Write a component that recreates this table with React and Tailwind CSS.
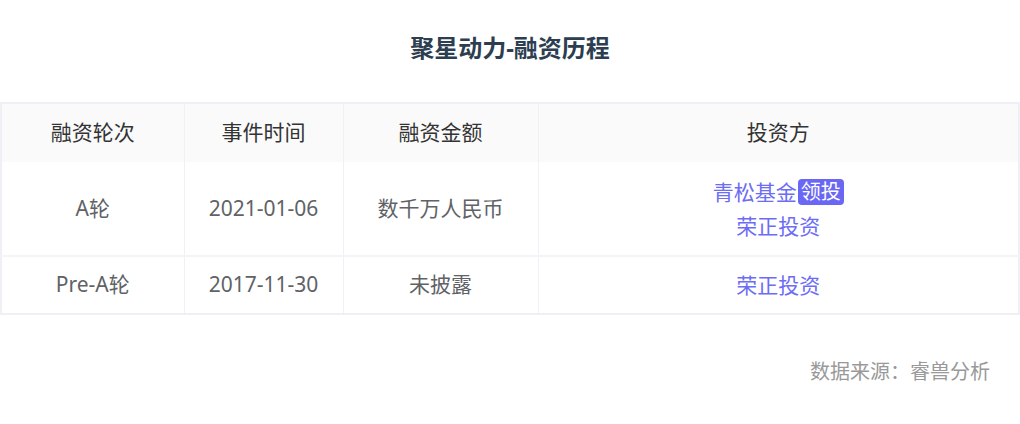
const rows = [
  { round: 'A轮', date: '2021-01-06', amount: '数千万人民币', investors: [{ name: '青松基金', lead: true }, { name: '荣正投资' }] },
  { round: 'Pre-A轮', date: '2017-11-30', amount: '未披露', investors: [{ name: '荣正投资' }] },
]

export default function App() {
  return (
    <div className="w-[1020px] h-[424px] bg-white" style={{ fontFamily: '"Noto Sans", "Noto Sans CJK SC", sans-serif' }}>
      <h1 className="pt-[32px] h-[102px] text-center text-[24px] font-bold text-[#2c3e50] leading-[32px]">聚星动力-融资历程</h1>

      <table className="w-[1020px] border-collapse border-2 border-[#eef0f5] text-[21px] text-[#606266]">
        <colgroup>
          <col className="w-[183px]" />
          <col className="w-[159px]" />
          <col className="w-[195px]" />
          <col />
        </colgroup>
        <thead>
          <tr className="h-[59px] bg-[#fafafa] text-[#333]">
            <th className="font-normal border-r border-[#f0f1f5]">融资轮次</th>
            <th className="font-normal border-r border-[#f0f1f5]">事件时间</th>
            <th className="font-normal border-r border-[#f0f1f5]">融资金额</th>
            <th className="font-normal">投资方</th>
          </tr>
        </thead>
        <tbody>
          {rows.map((r, i) => (
            <tr key={i} className={`${i === 0 ? 'h-[94px]' : 'h-[58px]'} border-t-2 border-[#f3f4f8] first:border-t-0`}>
              <td className="text-center border-r border-[#f0f1f5]">{r.round}</td>
              <td className="text-center border-r border-[#f0f1f5]">{r.date}</td>
              <td className="text-center border-r border-[#f0f1f5]">{r.amount}</td>
              <td className="text-center">
                <div className="flex flex-col items-center gap-[8px] text-[#6c6cf5]">
                  {r.investors.map((inv) => (
                    <div key={inv.name} className="flex items-center leading-[26px]">
                      <span>{inv.name}</span>
                      {inv.lead && (
                        <span className="ml-[1px] h-[26px] px-[3px] rounded-[4px] bg-[#6a67f4] text-white text-[20px] leading-[26px]">领投</span>
                      )}
                    </div>
                  ))}
                </div>
              </td>
            </tr>
          ))}
        </tbody>
      </table>

      <div className="mt-[44px] pr-[30px] text-right text-[20px] text-[#999] leading-[26px]">数据来源：睿兽分析</div>
    </div>
  )
}
